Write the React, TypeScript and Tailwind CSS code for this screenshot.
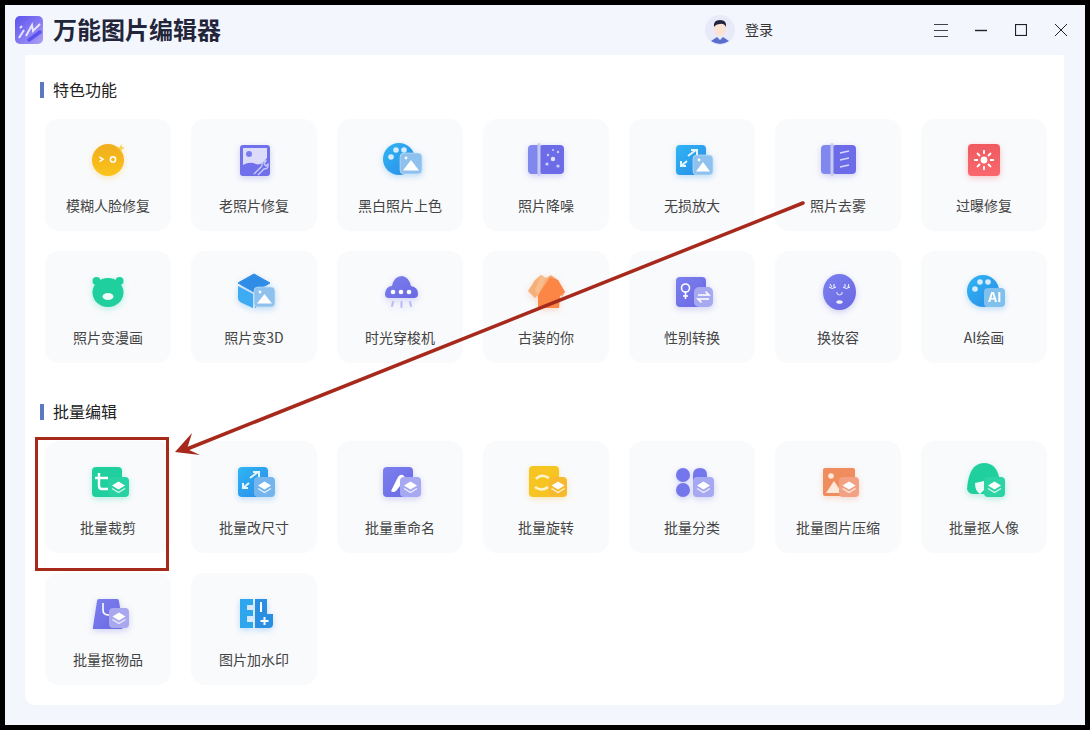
import React from "react";

const Layers = ({ fill = "url(#gLayer)", x = 24, y = 19, w = 21, h = 20 }: { fill?: string; x?: number; y?: number; w?: number; h?: number }) => {
  const cx = x + w / 2;
  const cy = y + h / 2;
  return (
    <g>
      <rect x={x} y={y} width={w} height={h} rx={4} fill={fill} />
      <path d={`M${cx} ${cy - 5.5} L${cx + 6.5} ${cy - 1.5} L${cx} ${cy + 2.5} L${cx - 6.5} ${cy - 1.5}Z`} fill="#fff" />
      <path d={`M${cx - 6.5} ${cy + 1.5} L${cx} ${cy + 5.5} L${cx + 6.5} ${cy + 1.5}`} fill="none" stroke="#fff" strokeWidth={1.4} opacity={0.8} />
    </g>
  );
};

const Pic = ({ x = 24, y = 19, w = 21, h = 20, fill = "#8fc1ee" }: { x?: number; y?: number; w?: number; h?: number; fill?: string }) => (
  <g>
    <rect x={x} y={y} width={w} height={h} rx={4} fill={fill} stroke="#cfe5f8" strokeWidth={0.6} />
    <path d={`M${x + 3} ${y + h - 3.5} L${x + w / 2} ${y + 7} L${x + w - 3} ${y + h - 3.5}Z`} fill="#fff" strokeLinejoin="round" />
    <circle cx={x + 6} cy={y + 5} r={1.4} fill="#fff" />
  </g>
);

const Svg = ({ children, shadow }: { children: React.ReactNode; shadow: string }) => (
  <svg width="48" height="48" viewBox="0 0 48 48" className={shadow}>
    {children}
  </svg>
);

const sPurple = "drop-shadow-[0_2px_3px_rgba(110,112,230,0.3)]";
const sBlue = "drop-shadow-[0_2px_3px_rgba(50,150,240,0.3)]";
const sGreen = "drop-shadow-[0_2px_3px_rgba(30,210,160,0.3)]";
const sYellow = "drop-shadow-[0_2px_3px_rgba(245,190,30,0.3)]";
const sOrange = "drop-shadow-[0_2px_3px_rgba(245,140,90,0.3)]";
const sRed = "drop-shadow-[0_2px_3px_rgba(240,80,90,0.3)]";

const Split = ({ x, divider, children }: { x: number; divider: number; children: React.ReactNode }) => (
  <Svg shadow={sPurple}>
    <rect x={x} y={9} width={divider - x + 3} height={29} rx={4} fill="#8088ee" />
    <rect x={divider} y={9} width={42 - divider} height={29} rx={4} fill="#6c6ce8" />
    <rect x={divider - 1.5} y={7} width={3} height={33} rx={1.5} fill="#c8caf6" />
    {children}
  </Svg>
);

const Palette = ({ overlay }: { overlay: React.ReactNode }) => (
  <Svg shadow={sBlue}>
    <circle cx={23} cy={23} r={16} fill="url(#gBlue)" />
    <circle cx={15} cy={21} r={2.8} fill="#d4ecfb" />
    <circle cx={20} cy={14} r={2.8} fill="#d4ecfb" />
    <circle cx={28} cy={14} r={2.8} fill="#d4ecfb" />
    {overlay}
  </Svg>
);

const icons: Record<string, React.ReactNode> = {
  face: (
    <Svg shadow={sYellow}>
      <circle cx={24} cy={24} r={16} fill="url(#gYellow)" />
      <path d="M15.5 21 L19 23.3 L15.5 25.6" fill="none" stroke="#fff" strokeWidth={1.5} />
      <circle cx={29} cy={23.4} r={2.6} fill="none" stroke="#fff" strokeWidth={1.5} />
      <path d="M37 8 L38 11 L41 12 L38 13 L37 16 L36 13 L33 12 L36 11Z" fill="#fbd04a" />
    </Svg>
  ),
  oldphoto: (
    <Svg shadow={sPurple}>
      <rect x={10} y={9} width={30} height={31} rx={3} fill="#6f70ea" />
      <rect x={13} y={12} width={24} height={22} fill="#dcdcfa" />
      <circle cx={19} cy={18} r={3} fill="#7c7ded" />
      <path d="M13 35 L13 29 Q20 25 26 28 Q31 30 37 22 L37 35Z" fill="#6f70ea" />
      <path d="M24 38 L32 30 M32 30 Q31 25 36 25 L34 28 L36 30 L38 28 Q39 33 34 33 L28 39" fill="none" stroke="#cdcef8" strokeWidth={1.3} />
    </Svg>
  ),
  palette: <Palette overlay={<Pic x={24} y={17} w={22} h={21} />} />,
  noise: (
    <Split x={6} divider={17}>
      <circle cx={31} cy={23} r={2.2} fill="#e2e3fb" />
      <circle cx={26} cy={19} r={1.2} fill="#d0d1f8" />
      <circle cx={36} cy={16} r={1.2} fill="#d0d1f8" />
      <circle cx={25} cy={28} r={1.6} fill="#d0d1f8" />
      <circle cx={36} cy={30} r={1.6} fill="#d0d1f8" />
      <circle cx={31} cy={14} r={1} fill="#d0d1f8" />
    </Split>
  ),
  zoom: (
    <Svg shadow={sBlue}>
      <rect x={8} y={9} width={30} height={30} rx={4} fill="url(#gBlue)" />
      <path d="M20 20 L28 14 M23 14 L29 14 L29 19 M13 25 L13 30 L18 30 M13 30 L19 25" fill="none" stroke="#e6f4fd" strokeWidth={2} />
      <Pic x={25} y={19} w={20} h={20} />
    </Svg>
  ),
  fog: (
    <Split x={7} divider={18}>
      <path d="M26 17 L35 15 M26 24 L35 22 M26 31 L35 29" stroke="#d6d7fa" strokeWidth={1.6} />
    </Split>
  ),
  expo: (
    <Svg shadow={sRed}>
      <rect x={8} y={8} width={32} height={32} rx={4} fill="url(#gRed)" />
      <circle cx={24} cy={24} r={3.4} fill="#fff" />
      <path d="M24 14 V18 M24 30 V34 M14 24 H18 M30 24 H34 M17 17 L20 20 M28 28 L31 31 M31 17 L28 20 M20 28 L17 31" stroke="#fff" strokeWidth={1.8} />
    </Svg>
  ),
  bear: (
    <Svg shadow={sGreen}>
      <circle cx={12.5} cy={13} r={4} fill="#1fcf9e" />
      <circle cx={35.5} cy={13} r={4} fill="#1fcf9e" />
      <ellipse cx={24} cy={24.5} rx={15.5} ry={14.5} fill="#1fcf9e" />
      <ellipse cx={24} cy={28.5} rx={5.5} ry={3.5} fill="#eefbf6" />
    </Svg>
  ),
  cube: (
    <Svg shadow={sBlue}>
      <path d="M24 6 L40 15 L24 24 L8 15Z" fill="#2f8de6" stroke="#2f8de6" strokeLinejoin="round" />
      <path d="M8 18 L23 26 L23 40 L12 35 Q8 33 8 30Z" fill="#3eabf2" />
      <path d="M25 26 L38 19 L38 32 L25 40Z" fill="#2a97ec" />
      <Pic x={24} y={19} w={21} h={20} />
    </Svg>
  ),
  ufo: (
    <Svg shadow={sPurple}>
      <path d="M9 26 Q10 18 16 18 Q18 8 26 8 Q33 9 35 18 Q42 19 42 26 Q42 30 38 30 H13 Q9 30 9 26Z" fill="url(#gPurple)" />
      <circle cx={17} cy={24} r={2.3} fill="#fff" />
      <circle cx={25} cy={24} r={2.3} fill="#fff" />
      <circle cx={33} cy={24} r={2.3} fill="#fff" />
      <path d="M17 34 L16 38 M25.5 34 V39 M34 34 L35 38" stroke="#b9baf3" strokeWidth={2} strokeLinecap="round" />
    </Svg>
  ),
  robe: (
    <Svg shadow={sOrange}>
      <path d="M19 7 L24 10 L29 7 L36 12 L43 24 L40 29 L37 26 L37 40 H16 L16 27 L13 30 L6 23 L13 12Z" fill="#f5b07a" strokeLinejoin="round" />
      <path d="M28 9 L36 12 L43 24 L38 28 L37 40 H16 L16 27 Z" fill="#fb8646" />
      <path d="M19 7 L24 10 L16 27 L13 22Z" fill="#f7bd8d" />
    </Svg>
  ),
  gender: (
    <Svg shadow={sPurple}>
      <rect x={8} y={9} width={30} height={30} rx={4} fill="url(#gPurple)" />
      <circle cx={17.5} cy={20} r={4} fill="none" stroke="#fff" strokeWidth={1.6} />
      <path d="M17.5 24 V31 M15 28 H20" stroke="#fff" strokeWidth={1.6} />
      <rect x={26} y={19} width={19} height={20} rx={5} fill="#a6a8f1" />
      <path d="M30 27 H41 L37.5 23.5 M41 31 H30 L33.5 34.5" fill="none" stroke="#fff" strokeWidth={1.6} />
    </Svg>
  ),
  makeup: (
    <Svg shadow={sPurple}>
      <ellipse cx={25.5} cy={24} rx={16.5} ry={18} fill="url(#gPurple)" />
      <path d="M15 19 Q18 22 22 19 M29 19 Q32 22 36 19 M16 16 L18 19 M20 16 L20 19 M31 16 L31 19 M35 16 L34 19" fill="none" stroke="#fff" strokeWidth={1} />
      <path d="M23 24 V26 Q25.5 28 28 26 V24" fill="none" stroke="#e8e8fb" strokeWidth={1} />
      <ellipse cx={25.5} cy={34} rx={3.2} ry={1.8} fill="#f0f0fc" />
    </Svg>
  ),
  ai: (
    <Palette
      overlay={
        <g>
          <rect x={24} y={20} width={21} height={19} rx={4} fill="#7fc0ec" />
          <text x={34.5} y={34} textAnchor="middle" fontSize={13} fontWeight={700} fill="#fff" fontFamily="Inter, sans-serif">
            AI
          </text>
        </g>
      }
    />
  ),
  crop: (
    <Svg shadow={sGreen}>
      <rect x={8} y={9} width={30} height={30} rx={4} fill="#1fcf9e" />
      <path d="M15 15 V28 Q15 31 18 31 H24 M11 20 H24" fill="none" stroke="#fff" strokeWidth={2.4} />
      <Layers fill="#28d2a3" />
    </Svg>
  ),
  resize: (
    <Svg shadow={sBlue}>
      <rect x={8} y={9} width={30} height={30} rx={4} fill="url(#gBlue)" />
      <path d="M20 20 L28 14 M23 14 L29 14 L29 19 M13 25 L13 30 L18 30 M13 30 L19 25" fill="none" stroke="#e6f4fd" strokeWidth={2} />
      <Layers fill="#74b5ee" />
    </Svg>
  ),
  rename: (
    <Svg shadow={sPurple}>
      <rect x={7} y={9} width={30} height={30} rx={4} fill="url(#gPurple)" />
      <path d="M15 33 L22 19 Q25 15 28 18 Q30 20 28 23 L20 33 Q17 35 15 33Z" fill="#fff" />
      <Layers fill="#a6a8f1" />
    </Svg>
  ),
  rotate: (
    <Svg shadow={sYellow}>
      <rect x={7} y={8} width={30} height={31} rx={4} fill="#f6c521" />
      <path d="M14 21 Q19 15 27 20 M26 29 Q20 34 13 29" fill="none" stroke="#fdf3cf" strokeWidth={2.6} />
      <Layers fill="#f7b92e" x={27} w={18} />
    </Svg>
  ),
  classify: (
    <Svg shadow={sPurple}>
      <circle cx={15} cy={17} r={7} fill="#7477ec" />
      <circle cx={15} cy={32} r={7} fill="#7477ec" />
      <path d="M25 17 Q25 10 32 10 Q39 10 39 17 V22 H25Z" fill="#7477ec" />
      <Layers fill="#a6a8f1" x={25} />
    </Svg>
  ),
  compress: (
    <Svg shadow={sOrange}>
      <rect x={9} y={10} width={32} height={28} rx={2} fill="#ef8d5e" />
      <circle cx={17} cy={18} r={2.8} fill="#fde8dc" />
      <path d="M12 35 L20 23 L28 35Z" fill="#fde8dc" />
      <Layers fill="#f2a283" x={25} y={19} w={20} h={20} />
    </Svg>
  ),
  person: (
    <Svg shadow={sGreen}>
      <path d="M7 31 Q9 5 24 5 Q36 5 39 19 V36 H14 Q8 36 7 31Z" fill="#1fcf9e" />
      <path d="M15 25 L24 23 L24 32 L20 36 Q15 33 15 25Z" fill="#ecfbf5" />
      <Layers fill="#2cd4a5" x={24} y={19} w={21} h={20} />
    </Svg>
  ),
  item: (
    <Svg shadow={sPurple}>
      <path d="M15 9 H33 Q35 9 35 11 L39 37 Q39 39 37 39 H10 Q8 39 9 37 L13 11 Q13 9 15 9Z" fill="url(#gPurple)" />
      <path d="M19 13 V20 Q19 25 25 25" fill="none" stroke="#fff" strokeWidth={1.6} />
      <Layers fill="#a9a7ee" x={25} y={18} w={20} h={20} />
    </Svg>
  ),
  mark: (
    <Svg shadow={sBlue}>
      <path d="M10 9 H23 V15 H17 V20 H23 V26 H17 V32 H23 V38 H10Z" fill="#2ea6ee" />
      <path d="M25 9 H37 V24 H43 V34 Q43 38 39 38 H25Z" fill="#2a8fe0" />
      <path d="M31 12 V22" stroke="#fff" strokeWidth={2} />
      <path d="M34.5 27 V35 M30.5 31 H38.5" stroke="#fff" strokeWidth={2} />
    </Svg>
  ),
};

const Card = ({ icon, label }: { icon: string; label: string }) => (
  <div className="h-[112px] rounded-[14px] bg-[#f9fafc] flex flex-col items-center pt-[17px]">
    <div className="w-12 h-12 shrink-0">{icons[icon]}</div>
    <div className="mt-[11px] h-5 leading-5 text-sm text-[#444]">{label}</div>
  </div>
);

const Section = ({ title, items, className }: { title: string; items: [string, string][]; className: string }) => (
  <section className={className}>
    <div className="flex items-center h-6 pl-[15px]">
      <div className="w-1 h-4 bg-[#5d78c2]" />
      <h2 className="ml-[9px] mb-[2px] text-base text-[#222] font-normal">{title}</h2>
    </div>
    <div className="mt-[17px] ml-5 grid grid-cols-[repeat(7,126px)] gap-5">
      {items.map(([icon, label]) => (
        <Card key={label} icon={icon} label={label} />
      ))}
    </div>
  </section>
);

const featured: [string, string][] = [
  ["face", "模糊人脸修复"],
  ["oldphoto", "老照片修复"],
  ["palette", "黑白照片上色"],
  ["noise", "照片降噪"],
  ["zoom", "无损放大"],
  ["fog", "照片去雾"],
  ["expo", "过曝修复"],
  ["bear", "照片变漫画"],
  ["cube", "照片变3D"],
  ["ufo", "时光穿梭机"],
  ["robe", "古装的你"],
  ["gender", "性别转换"],
  ["makeup", "换妆容"],
  ["ai", "AI绘画"],
];

const batch: [string, string][] = [
  ["crop", "批量裁剪"],
  ["resize", "批量改尺寸"],
  ["rename", "批量重命名"],
  ["rotate", "批量旋转"],
  ["classify", "批量分类"],
  ["compress", "批量图片压缩"],
  ["person", "批量抠人像"],
  ["item", "批量抠物品"],
  ["mark", "图片加水印"],
];

export default function App() {
  return (
    <div
      className="relative w-[1090px] h-[730px] bg-black p-[5px] overflow-hidden"
      style={{ fontFamily: '"Noto Sans CJK SC", "Noto Sans", sans-serif' }}
    >
      <svg className="absolute w-0 h-0">
        <defs>
          <linearGradient id="gBlue" x1="0" y1="0" x2="1" y2="1">
            <stop offset="0" stopColor="#2fb6f4" />
            <stop offset="1" stopColor="#2a8ae6" />
          </linearGradient>
          <linearGradient id="gPurple" x1="0" y1="0" x2="1" y2="1">
            <stop offset="0" stopColor="#7b80ee" />
            <stop offset="1" stopColor="#6a68e2" />
          </linearGradient>
          <linearGradient id="gYellow" x1="0" y1="0" x2="0" y2="1">
            <stop offset="0" stopColor="#f0ad1e" />
            <stop offset="1" stopColor="#fbc31a" />
          </linearGradient>
          <linearGradient id="gRed" x1="0" y1="0" x2="0" y2="1">
            <stop offset="0" stopColor="#ee5a60" />
            <stop offset="1" stopColor="#f9676c" />
          </linearGradient>
          <linearGradient id="gLayer" x1="0" y1="0" x2="1" y2="1">
            <stop offset="0" stopColor="#a6a8f1" />
            <stop offset="1" stopColor="#9c9eee" />
          </linearGradient>
          <linearGradient id="gLogo" x1="0" y1="0" x2="1" y2="1">
            <stop offset="0" stopColor="#5a52ee" />
            <stop offset="1" stopColor="#ad9ff5" />
          </linearGradient>
        </defs>
      </svg>

      <div className="w-[1080px] h-[720px] bg-[#f4f6fe] flex flex-col">
        <header className="h-[50px] shrink-0 flex items-center pl-[10px]">
          <svg width="28" height="28" viewBox="0 0 28 28">
            <rect width="28" height="28" rx="5" fill="url(#gLogo)" />
            <path d="M5 12 L7 10 M4 22 L9 14 M11 20 L17 9 L18 15 L25 8" fill="none" stroke="#fff" strokeWidth="2" opacity="0.8" />
            <path d="M14 24 L25 16" stroke="#5a52ee" strokeWidth="3.5" strokeLinecap="round" />
          </svg>
          <h1 className="ml-[10px] mb-[2px] text-2xl font-bold text-[#23263a] leading-none">万能图片编辑器</h1>
          <svg width="30" height="30" viewBox="0 0 30 30" className="ml-[484px]">
            <circle cx="15" cy="15" r="15" fill="#e8eaf9" />
            <ellipse cx="15" cy="14" rx="6" ry="7" fill="#fbe2d2" />
            <path d="M9 12 Q8 5 15 5 Q22 5 21 12 Q19 8 15 9 Q11 9 9 12Z" fill="#23233f" />
            <path d="M6 26 L12 22 L15 25 L18 22 L24 26 Q15 32 6 26Z" fill="#5a6fd0" />
          </svg>
          <span className="ml-[10px] mb-[2px] text-sm text-[#333]">登录</span>
          <svg width="14" height="14" viewBox="0 0 14 14" className="ml-[161px]" stroke="#444">
            <path d="M0 1.5 H14 M0 7.5 H14 M0 13.5 H14" strokeWidth="1" />
          </svg>
          <svg width="12" height="12" viewBox="0 0 12 12" className="ml-[27px]" stroke="#222">
            <path d="M0 6.5 H12" strokeWidth="1.4" />
          </svg>
          <svg width="12" height="12" viewBox="0 0 12 12" className="ml-[28px]" fill="none" stroke="#222">
            <rect x="0.5" y="0.5" width="11" height="11" strokeWidth="1.2" />
          </svg>
          <svg width="12" height="12" viewBox="0 0 12 12" className="ml-[28px]" stroke="#222">
            <path d="M0 0 L12 12 M12 0 L0 12" strokeWidth="1" />
          </svg>
        </header>

        <main className="ml-5 w-[1039px] h-[650px] bg-white rounded-t-[2px] rounded-b-[10px] pt-[23px]">
          <Section title="特色功能" items={featured} className="" />
          <Section title="批量编辑" items={batch} className="mt-[37px]" />
        </main>
      </div>

      <div className="absolute left-[35px] top-[437px] w-[134px] h-[134px] border-[3px] border-[#a6291c]" />
      <svg className="absolute left-0 top-0 pointer-events-none" width="1090" height="730" viewBox="0 0 1090 730">
        <path d="M803 203 L187 449" stroke="#a6291c" strokeWidth="3.5" strokeLinecap="round" />
        <path d="M175 452 L192 433 L187 449 L200 455Z" fill="#a6291c" />
      </svg>
    </div>
  );
}
